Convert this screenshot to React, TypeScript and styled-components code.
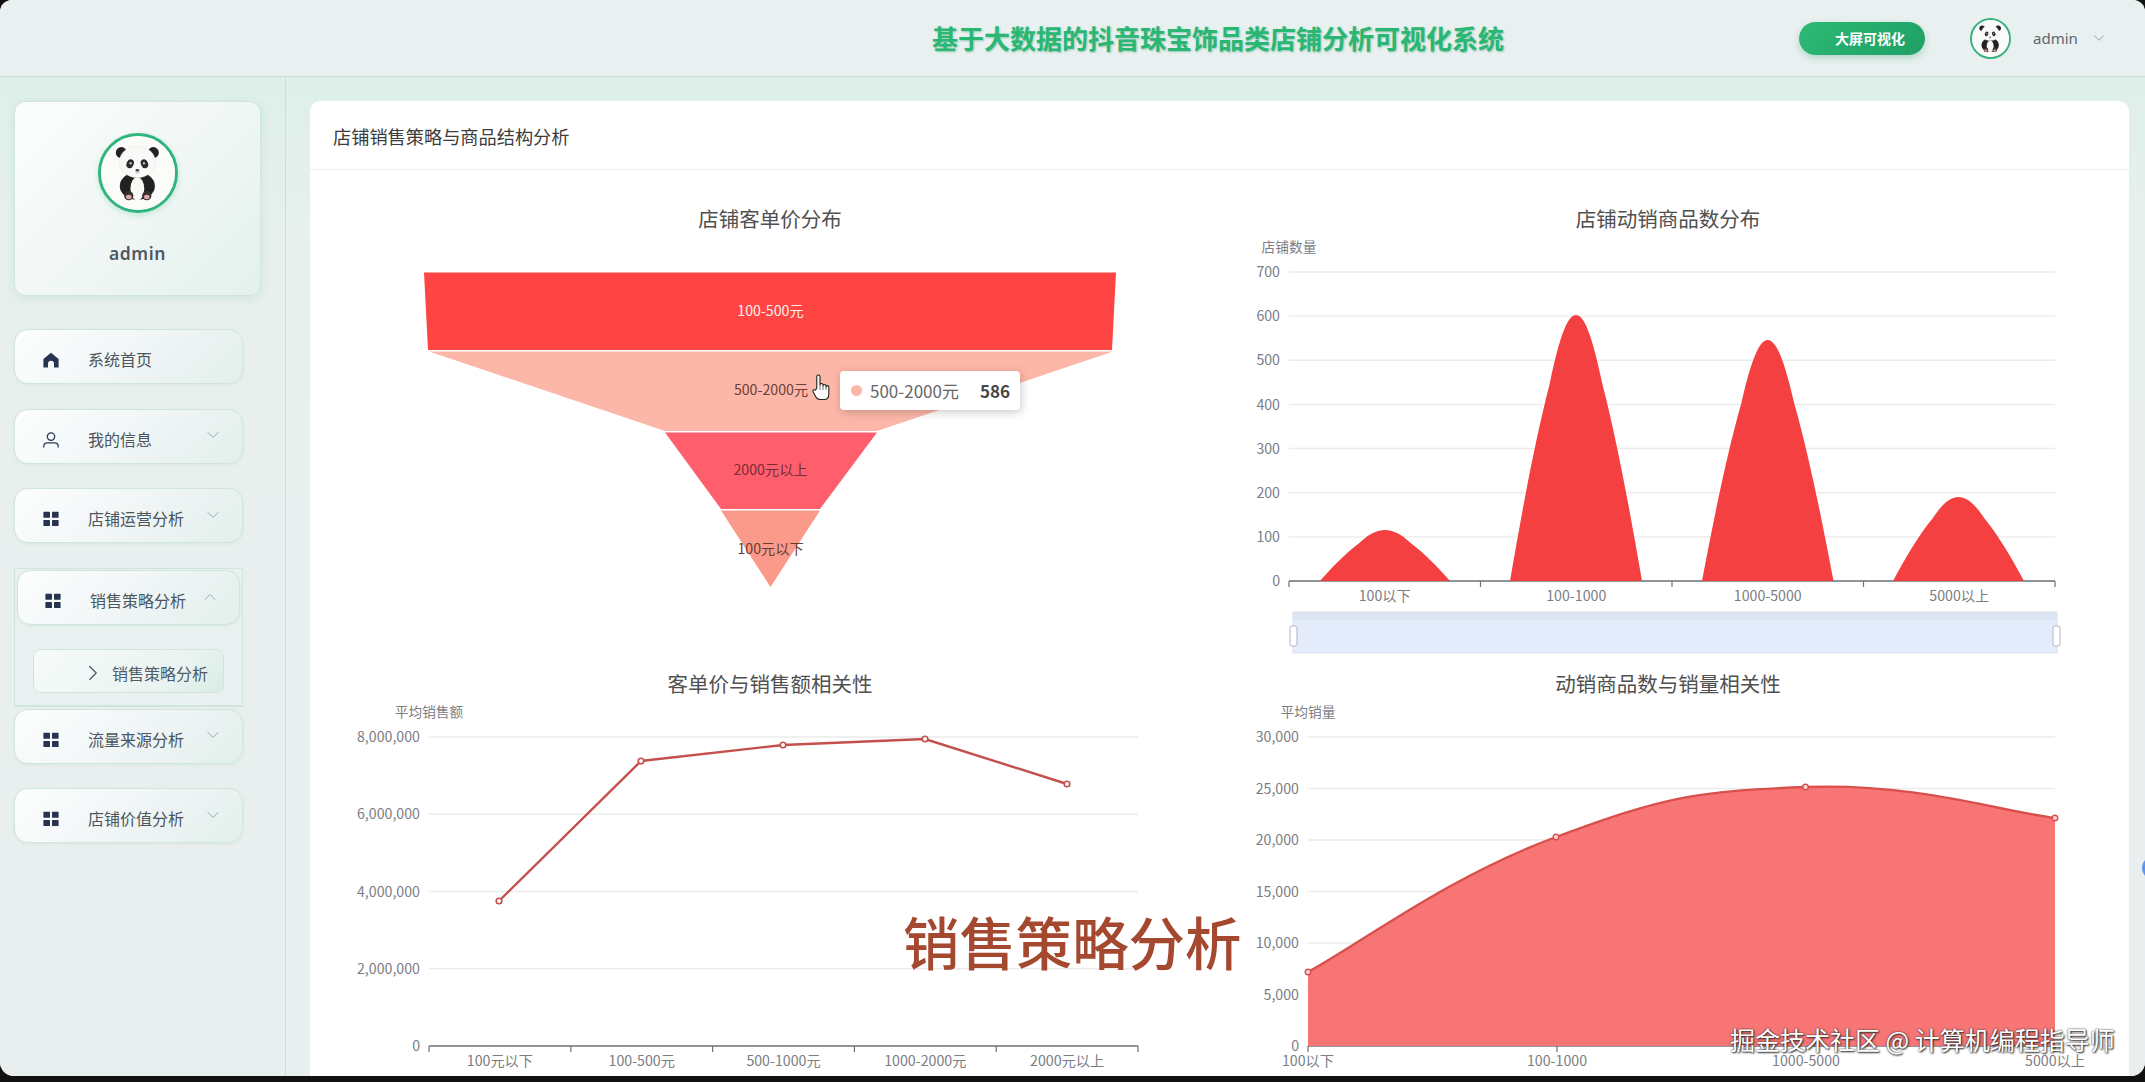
import React from 'react';
import styled, { createGlobalStyle } from 'styled-components';
import { ChevronDown, ChevronRight, ChevronUp } from 'lucide-react';

const FONT = '"Noto Sans CJK SC", "Noto Sans", sans-serif';
const AXIS_TEXT = '#7b7d84';

const GlobalStyle = createGlobalStyle`
	html,
	body {
		margin: 0;
		padding: 0;
		background: #111;
	}
	* {
		box-sizing: border-box;
	}
`;

type NavEntry = { label: string; icon: 'home' | 'user' | 'grid'; arrow?: boolean };

const TOP_NAV: NavEntry[] = [
	{ label: '系统首页', icon: 'home' },
	{ label: '我的信息', icon: 'user', arrow: true },
	{ label: '店铺运营分析', icon: 'grid', arrow: true },
];

const BOTTOM_NAV: NavEntry[] = [
	{ label: '流量来源分析', icon: 'grid', arrow: true },
	{ label: '店铺价值分析', icon: 'grid', arrow: true },
];

const Panda = () => (
	<svg viewBox="0 0 80 80" width="100%" height="100%">
		<circle cx="40" cy="40" r="40" fill="#fbfbf9" />
		<circle cx="22" cy="18" r="6" fill="#232323" />
		<circle cx="56.5" cy="18" r="6" fill="#232323" />
		<ellipse cx="39.3" cy="54" rx="19" ry="15" fill="#232222" />
		<ellipse cx="39.3" cy="57" rx="7.5" ry="12.5" fill="#f8f8f5" />
		<ellipse cx="39.3" cy="28" rx="19.5" ry="17" fill="#f9f9f7" stroke="#e4e4e0" strokeWidth="0.5" />
		<ellipse cx="31.5" cy="30" rx="3.8" ry="4.9" fill="#2a2a2a" transform="rotate(24 31.5 30)" />
		<ellipse cx="47" cy="30" rx="3.8" ry="4.9" fill="#2a2a2a" transform="rotate(-24 47 30)" />
		<circle cx="32" cy="29.5" r="1.3" fill="#bdbdbd" />
		<circle cx="46.5" cy="29.5" r="1.3" fill="#bdbdbd" />
		<ellipse cx="39.3" cy="37" rx="1.9" ry="1.3" fill="#3a3a3a" />
		<path d="M37 39.2 q2.3 1.6 4.6 0" fill="none" stroke="#666" strokeWidth="0.5" />
		<circle cx="30" cy="64.5" r="5" fill="#3a3030" />
		<circle cx="49.5" cy="64.5" r="5" fill="#3a3030" />
		<ellipse cx="30" cy="66" rx="3" ry="2.4" fill="#d9a8a8" />
		<ellipse cx="49.5" cy="66" rx="3" ry="2.4" fill="#d9a8a8" />
	</svg>
);

const NavIcon = ({ kind }: { kind: NavEntry['icon'] }) => {
	if (kind === 'home') {
		return (
			<svg viewBox="0 0 16 16" width="16" height="16">
				<path d="M8 .8 15.6 7v8.4h-4.6v-3.6a3 3 0 0 0-6 0v3.6H.4V7z" fill="#27344f" />
			</svg>
		);
	}
	if (kind === 'user') {
		return (
			<svg viewBox="0 0 16 16" width="16" height="16" fill="none" stroke="#2d3a52" strokeWidth="1.3">
				<circle cx="8" cy="4.6" r="3.7" />
				<path d="M.8 15.4v-1.2c0-2 1.6-3.4 3.6-3.4h7.2c2 0 3.6 1.4 3.6 3.4v1.2" />
			</svg>
		);
	}
	return (
		<svg viewBox="0 0 16 16" width="16" height="16" fill="#27344f">
			<rect x="0.4" y="0.8" width="6.6" height="6" rx="0.6" />
			<rect x="9" y="0.8" width="6.6" height="6" rx="0.6" />
			<rect x="0.4" y="9" width="6.6" height="6" rx="0.6" />
			<rect x="9" y="9" width="6.6" height="6" rx="0.6" />
		</svg>
	);
};

const smoothPath = (pts: number[][], k = 0.2) => {
	let d = `M${pts[0][0]},${pts[0][1]}`;
	for (let i = 0; i < pts.length - 1; i++) {
		const p0 = pts[Math.max(i - 1, 0)];
		const p1 = pts[i];
		const p2 = pts[i + 1];
		const p3 = pts[Math.min(i + 2, pts.length - 1)];
		d += ` C${p1[0] + (p2[0] - p0[0]) * k},${p1[1] + (p2[1] - p0[1]) * k} ${p2[0] - (p3[0] - p1[0]) * k},${p2[1] - (p3[1] - p1[1]) * k} ${p2[0]},${p2[1]}`;
	}
	return d;
};

// bell shape of the pictorial bars, one path stretched into each box
const peakPath = (x0: number, x1: number, top: number, base: number) => {
	const w = x1 - x0;
	const h = base - top;
	const pt = (a: number, t: number) => `${x0 + (0.5 + a) * w},${top + t * h}`;
	return [
		`M${pt(-0.5, 1)}`,
		`C${pt(-0.41, 0.74)} ${pt(-0.31, 0.47)} ${pt(-0.2, 0.26)}`,
		`C${pt(-0.12, 0.07)} ${pt(-0.06, 0)} ${pt(0, 0)}`,
		`C${pt(0.06, 0)} ${pt(0.12, 0.07)} ${pt(0.2, 0.26)}`,
		`C${pt(0.31, 0.47)} ${pt(0.41, 0.74)} ${pt(0.5, 1)}`,
		'Z',
	].join(' ');
};

type AxesProps = {
	name: string;
	x0: number;
	x1: number;
	yLabels: string[];
	categories: string[];
	pointAxis?: boolean;
};

const TOP_Y = 34;
const BASE_Y = 343;

const Axes = ({ name, x0, x1, yLabels, categories, pointAxis }: AxesProps) => {
	const steps = yLabels.length - 1;
	const slots = pointAxis ? categories.length - 1 : categories.length;
	const slot = (x1 - x0) / slots;
	return (
		<>
			<AxisName x={x0} y={8}>
				{name}
			</AxisName>
			{yLabels.map((label, i) => {
				const y = BASE_Y - ((BASE_Y - TOP_Y) * i) / steps;
				return (
					<g key={label}>
						{i > 0 && <line x1={x0} x2={x1} y1={y} y2={y} stroke="#ebebeb" strokeWidth="1.4" />}
						<YLabel x={x0 - 9} y={y - 0.8}>
							{label}
						</YLabel>
					</g>
				);
			})}
			<line x1={x0} x2={x1} y1={BASE_Y} y2={BASE_Y} stroke="#6e7079" strokeWidth="1.4" />
			{Array.from({ length: slots + 1 }).map((_, i) => (
				<line
					key={i}
					x1={x0 + slot * i}
					x2={x0 + slot * i}
					y1={BASE_Y}
					y2={BASE_Y + 6}
					stroke="#6e7079"
					strokeWidth="1.2"
				/>
			))}
			{categories.map((label, i) => (
				<XLabel key={label} x={x0 + slot * (pointAxis ? i : i + 0.5)} y={357}>
					{label}
				</XLabel>
			))}
		</>
	);
};

const FunnelChart = () => (
	<ChartSvg viewBox="0 0 876 416">
		<polygon points="92,34.5 784,34.5 780,112 96,112" fill="#ff4444" />
		<polygon points="97,113.5 781,113.5 545,193 333,193" fill="#fdb7a8" />
		<polygon points="333,194.5 545,194.5 488,271 389,271" fill="#ff5f6d" />
		<polygon points="389,272.5 488,272.5 438.5,349" fill="#fb9a8a" />
		<FunnelLabel x={438.5} y={72} fill="#fdeeee">
			100-500元
		</FunnelLabel>
		<FunnelLabel x={439} y={151} fill="#6b4038">
			500-2000元
		</FunnelLabel>
		<FunnelLabel x={438.5} y={231} fill="#7a2a33">
			2000元以上
		</FunnelLabel>
		<FunnelLabel x={438.5} y={310} fill="#6a3a30">
			100元以下
		</FunnelLabel>
	</ChartSvg>
);

const PeakChart = () => (
	<ChartSvg viewBox="0 0 876 416">
		<Axes
			name="店铺数量"
			x0={59}
			x1={825}
			yLabels={['0', '100', '200', '300', '400', '500', '600', '700']}
			categories={['100以下', '100-1000', '1000-5000', '5000以上']}
		/>
		<path d={peakPath(90, 220, 292, 343)} fill="#f44040" />
		<path d={peakPath(280, 412, 77, 343)} fill="#f44040" />
		<path d={peakPath(472, 603.5, 102, 343)} fill="#f44040" />
		<path d={peakPath(663, 794, 259, 343)} fill="#f44040" />
		<rect x={63} y={374} width={764} height={41} fill="#e4ecfb" stroke="#d8e0f0" />
		<rect x={63} y={374} width={764} height={8} fill="#dde5f3" />
		<rect x={60} y={388} width={7} height={20} rx={2} fill="#fff" stroke="#a9b4c6" />
		<rect x={823} y={388} width={7} height={20} rx={2} fill="#fff" stroke="#a9b4c6" />
	</ChartSvg>
);

const LINE_POINTS = [
	[167, 198],
	[309, 58],
	[451, 42],
	[593, 36],
	[735, 81],
];

const LineChart = () => (
	<ChartSvg viewBox="0 0 876 416">
		<Axes
			name="平均销售额"
			x0={97}
			x1={806}
			yLabels={['0', '2,000,000', '4,000,000', '6,000,000', '8,000,000']}
			categories={['100元以下', '100-500元', '500-1000元', '1000-2000元', '2000元以上']}
		/>
		<polyline
			points={LINE_POINTS.map((p) => p.join(',')).join(' ')}
			fill="none"
			stroke="#c4504c"
			strokeWidth="2.4"
		/>
		{LINE_POINTS.map(([x, y]) => (
			<circle key={x} cx={x} cy={y} r={2.8} fill="#fff" stroke="#c4504c" strokeWidth="1.6" />
		))}
	</ChartSvg>
);

const AREA_POINTS = [
	[78, 269],
	[326, 134],
	[575.5, 84],
	[825, 115],
];

const AreaChart = () => (
	<ChartSvg viewBox="0 0 876 416">
		<Axes
			name="平均销量"
			x0={78}
			x1={825}
			yLabels={['0', '5,000', '10,000', '15,000', '20,000', '25,000', '30,000']}
			categories={['100以下', '100-1000', '1000-5000', '5000以上']}
			pointAxis
		/>
		<path d={`${smoothPath(AREA_POINTS, 0.22)} L825,${BASE_Y} L78,${BASE_Y} Z`} fill="#f87575" />
		<path d={smoothPath(AREA_POINTS, 0.22)} fill="none" stroke="#d8504c" strokeWidth="2.4" />
		{AREA_POINTS.map(([x, y]) => (
			<circle key={x} cx={x} cy={y} r={2.8} fill="#fbd5d3" stroke="#d8504c" strokeWidth="1.4" />
		))}
	</ChartSvg>
);

const HandIcon = () => (
	<svg viewBox="0 0 18 27" width="18" height="27">
		<path
			d="M4.8 14V2.6a1.6 1.6 0 0 1 3.2 0V11a1.5 1.5 0 0 1 3 0v1a1.5 1.5 0 0 1 3 0v1a1.4 1.4 0 0 1 2.8 0v7c0 3-1.5 5.5-4.5 5.5H8c-2.2 0-3.4-1.2-4.4-3L1.2 18c-.9-1.6.8-3 2.2-1.8z"
			fill="#fff"
			stroke="#222"
			strokeWidth="1.1"
			strokeLinejoin="round"
		/>
		<path d="M8 11v5M11 12v4M14 13v3" fill="none" stroke="#555" strokeWidth="0.8" />
	</svg>
);

const App = () => (
	<Frame>
		<GlobalStyle />
		<Header>
			<SystemTitle>基于大数据的抖音珠宝饰品类店铺分析可视化系统</SystemTitle>
			<ScreenButton>大屏可视化</ScreenButton>
			<HeaderAvatar>
				<Panda />
			</HeaderAvatar>
			<HeaderUser>admin</HeaderUser>
			<HeaderChevron>
				<ChevronDown size={18} strokeWidth={1.2} />
			</HeaderChevron>
		</Header>
		<Body>
			<Sidebar>
				<ProfileCard>
					<ProfileAvatar>
						<Panda />
					</ProfileAvatar>
					<ProfileName>admin</ProfileName>
				</ProfileCard>
				<Nav>
					{TOP_NAV.map((item) => (
						<NavItem key={item.label}>
							<NavIcon kind={item.icon} />
							<NavLabel>{item.label}</NavLabel>
							{item.arrow && (
								<NavArrow>
									<ChevronDown size={20} strokeWidth={1.2} />
								</NavArrow>
							)}
						</NavItem>
					))}
					<OpenGroup>
						<NavItem $inner>
							<NavIcon kind="grid" />
							<NavLabel>销售策略分析</NavLabel>
							<NavArrow>
								<ChevronUp size={20} strokeWidth={1.2} />
							</NavArrow>
						</NavItem>
						<SubItem>
							<SubArrow>
								<ChevronRight size={26} strokeWidth={1.1} />
							</SubArrow>
							销售策略分析
						</SubItem>
					</OpenGroup>
					{BOTTOM_NAV.map((item) => (
						<NavItem key={item.label}>
							<NavIcon kind={item.icon} />
							<NavLabel>{item.label}</NavLabel>
							<NavArrow>
								<ChevronDown size={20} strokeWidth={1.2} />
							</NavArrow>
						</NavItem>
					))}
				</Nav>
			</Sidebar>
			<Main>
				<Card>
					<CardHeader>店铺销售策略与商品结构分析</CardHeader>
					<ChartGrid>
						<ChartPanel>
							<ChartTitle>店铺客单价分布</ChartTitle>
							<FunnelChart />
							<Tooltip>
								<TooltipDot />
								<TooltipName>500-2000元</TooltipName>
								<TooltipValue>586</TooltipValue>
							</Tooltip>
							<HandCursor>
								<HandIcon />
							</HandCursor>
						</ChartPanel>
						<ChartPanel>
							<ChartTitle>店铺动销商品数分布</ChartTitle>
							<PeakChart />
						</ChartPanel>
						<ChartPanel>
							<ChartTitle>客单价与销售额相关性</ChartTitle>
							<LineChart />
						</ChartPanel>
						<ChartPanel>
							<ChartTitle>动销商品数与销量相关性</ChartTitle>
							<AreaChart />
						</ChartPanel>
					</ChartGrid>
				</Card>
			</Main>
		</Body>
		<Caption>销售策略分析</Caption>
		<Watermark>掘金技术社区 @ 计算机编程指导师</Watermark>
		<ScrollDot />
	</Frame>
);

const Frame = styled.div`
	position: relative;
	width: 2145px;
	height: 1076px;
	overflow: hidden;
	display: flex;
	flex-direction: column;
	border-radius: 12px 12px 14px 14px;
	background: #e9f0ef;
	font-family: ${FONT};
`;

const Header = styled.header`
	flex: none;
	display: flex;
	align-items: center;
	height: 77px;
	background: #e9f0f0;
	border-bottom: 1px solid #c6e0d8;
`;

const SystemTitle = styled.h1`
	margin: 0 0 0 932px;
	width: 574px;
	font-size: 26px;
	font-weight: 700;
	line-height: 34px;
	white-space: nowrap;
	color: #2ab673;
	text-shadow: 1px 1px 2px rgba(40, 150, 110, 0.45);
`;

const ScreenButton = styled.div`
	margin-left: 293px;
	width: 126px;
	height: 33px;
	padding-left: 36px;
	border-radius: 17px;
	font-size: 14px;
	font-weight: 700;
	line-height: 33px;
	color: #fff;
	background: linear-gradient(135deg, #2cba74, #1f9f66);
	box-shadow: 0 3px 7px rgba(40, 160, 110, 0.3);
`;

const HeaderAvatar = styled.div`
	margin-left: 45px;
	width: 41px;
	height: 41px;
	border: 2px solid #3bb07f;
	border-radius: 50%;
	overflow: hidden;
	background: #fff;
`;

const HeaderUser = styled.span`
	margin-left: 22px;
	font-family: 'Noto Sans', sans-serif;
	font-size: 15px;
	color: #5c6670;
`;

const HeaderChevron = styled.span`
	display: flex;
	margin-left: 12px;
	color: #8b959e;
`;

const Body = styled.div`
	flex: 1;
	display: flex;
	min-height: 0;
	background: linear-gradient(180deg, #deefe9 0, #e6f0ed 140px, #e9efee 420px);
`;

const Sidebar = styled.aside`
	flex: none;
	width: 286px;
	padding: 24px 0 0 14px;
	border-right: 1px solid #c6e3da;
`;

const ProfileCard = styled.div`
	display: flex;
	flex-direction: column;
	align-items: center;
	width: 247px;
	height: 195px;
	padding-top: 31px;
	border: 1px solid #cfe5de;
	border-radius: 12px;
	background: linear-gradient(135deg, #fbfefd 0%, #f1f7f6 50%, #e3f1ed 100%);
	box-shadow: 0 3px 10px rgba(120, 190, 165, 0.2);
`;

const ProfileAvatar = styled.div`
	width: 80px;
	height: 80px;
	border: 3px solid #2fb57e;
	border-radius: 50%;
	overflow: hidden;
	background: #fff;
	box-shadow: 0 2px 6px rgba(60, 170, 120, 0.25);
`;

const ProfileName = styled.div`
	margin-top: 28px;
	font-family: 'Noto Sans', sans-serif;
	font-size: 17.5px;
	font-weight: 600;
	letter-spacing: 0.6px;
	line-height: 24px;
	color: #4d5966;
`;

const Nav = styled.nav`
	display: flex;
	flex-direction: column;
	gap: 24.5px;
	width: 229px;
	margin-top: 33px;
`;

const NavItem = styled.div<{ $inner?: boolean }>`
	flex: none;
	display: flex;
	align-items: center;
	height: 55px;
	padding: 7px 19px 0 ${(props) => (props.$inner ? 27 : 28)}px;
	border: 1px solid #cfe5de;
	border-radius: 14px;
	background: linear-gradient(135deg, #fdfefe 0%, #eef4f4 60%, #e2f0ec 100%);
	box-shadow: 0 1px 3px rgba(120, 190, 165, 0.15);
`;

const NavLabel = styled.span`
	margin: -2px 0 0 29px;
	font-size: 16px;
	white-space: nowrap;
	color: #4a5560;
`;

const NavArrow = styled.span`
	display: flex;
	margin: -9px 0 0 auto;
	color: #9aa6ae;
`;

const OpenGroup = styled.div`
	flex: none;
	display: flex;
	flex-direction: column;
	height: 139px;
	margin-bottom: -22.5px;
	padding: 1.5px 2px 0;
	border: 1px solid #cfe5de;
	border-width: 1px 1px 2px;
	background: #e9f1f0;
`;

const SubItem = styled.div`
	flex: none;
	display: flex;
	align-items: center;
	align-self: center;
	width: 191px;
	height: 44px;
	margin-top: 24px;
	padding: 4px 0 0 46px;
	border: 1px solid #cfe5de;
	border-radius: 8px;
	font-size: 16px;
	white-space: nowrap;
	color: #4f5b66;
	background: linear-gradient(135deg, #f6fbfa 0%, #eaf3f1 70%, #d8ece5 100%);
`;

const SubArrow = styled.span`
	display: flex;
	margin-right: 6px;
	color: #505a64;
`;

const Main = styled.main`
	flex: 1;
	min-width: 0;
	padding: 24px 16px 0 24px;
`;

const Card = styled.section`
	height: 100%;
	border-radius: 10px 10px 0 0;
	background: #fff;
	overflow: hidden;
`;

const CardHeader = styled.div`
	height: 69px;
	padding-left: 23px;
	border-bottom: 1px solid #eeeeee;
	font-size: 18.2px;
	line-height: 70px;
	color: #3c3c3c;
`;

const ChartGrid = styled.div`
	display: grid;
	grid-template-columns: 876px 876px;
	grid-auto-rows: 465px;
	column-gap: 22px;
	padding: 19px 22px 0;
`;

const ChartPanel = styled.div`
	position: relative;
`;

const ChartTitle = styled.div`
	height: 49px;
	padding-top: 9px;
	font-size: 20.5px;
	line-height: 40px;
	text-align: center;
	color: #505050;
`;

const ChartSvg = styled.svg`
	display: block;
	width: 876px;
	height: 416px;
	overflow: visible;
	font-family: ${FONT};
`;

const AxisName = styled.text`
	font-size: 13.7px;
	text-anchor: middle;
	dominant-baseline: central;
	fill: ${AXIS_TEXT};
`;

const YLabel = styled.text`
	font-size: 14.2px;
	text-anchor: end;
	dominant-baseline: central;
	fill: ${AXIS_TEXT};
`;

const XLabel = styled.text`
	font-size: 14.2px;
	text-anchor: middle;
	dominant-baseline: central;
	fill: ${AXIS_TEXT};
`;

const FunnelLabel = styled.text`
	font-size: 14.2px;
	text-anchor: middle;
	dominant-baseline: central;
`;

const Tooltip = styled.div`
	position: absolute;
	left: 508px;
	top: 182px;
	display: flex;
	align-items: center;
	width: 180px;
	height: 39px;
	padding: 0 10px 0 11px;
	border-radius: 4px;
	background: #fff;
	box-shadow: 1px 2px 10px rgba(0, 0, 0, 0.22);
`;

const TooltipDot = styled.span`
	flex: none;
	width: 11px;
	height: 11px;
	margin-right: 8px;
	border-radius: 50%;
	background: #fdb7a8;
`;

const TooltipName = styled.span`
	font-size: 17px;
	color: #666;
`;

const TooltipValue = styled.span`
	margin-left: auto;
	font-size: 17px;
	font-weight: 700;
	color: #464646;
`;

const HandCursor = styled.div`
	position: absolute;
	left: 480px;
	top: 185px;
	display: flex;
`;

const Caption = styled.div`
	position: absolute;
	left: 903px;
	top: 901px;
	font-size: 56.4px;
	font-weight: 500;
	line-height: 80px;
	white-space: nowrap;
	color: #a4482f;
`;

const Watermark = styled.div`
	position: absolute;
	left: 1730px;
	top: 1021px;
	font-size: 25px;
	line-height: 36px;
	white-space: nowrap;
	color: #fff;
	text-shadow: 0 0 2px #222, 1px 1px 2px #333;
`;

const ScrollDot = styled.div`
	position: absolute;
	left: 2142px;
	top: 856px;
	width: 24px;
	height: 24px;
	border-radius: 50%;
	background: #5b94f5;
`;

export default App;
